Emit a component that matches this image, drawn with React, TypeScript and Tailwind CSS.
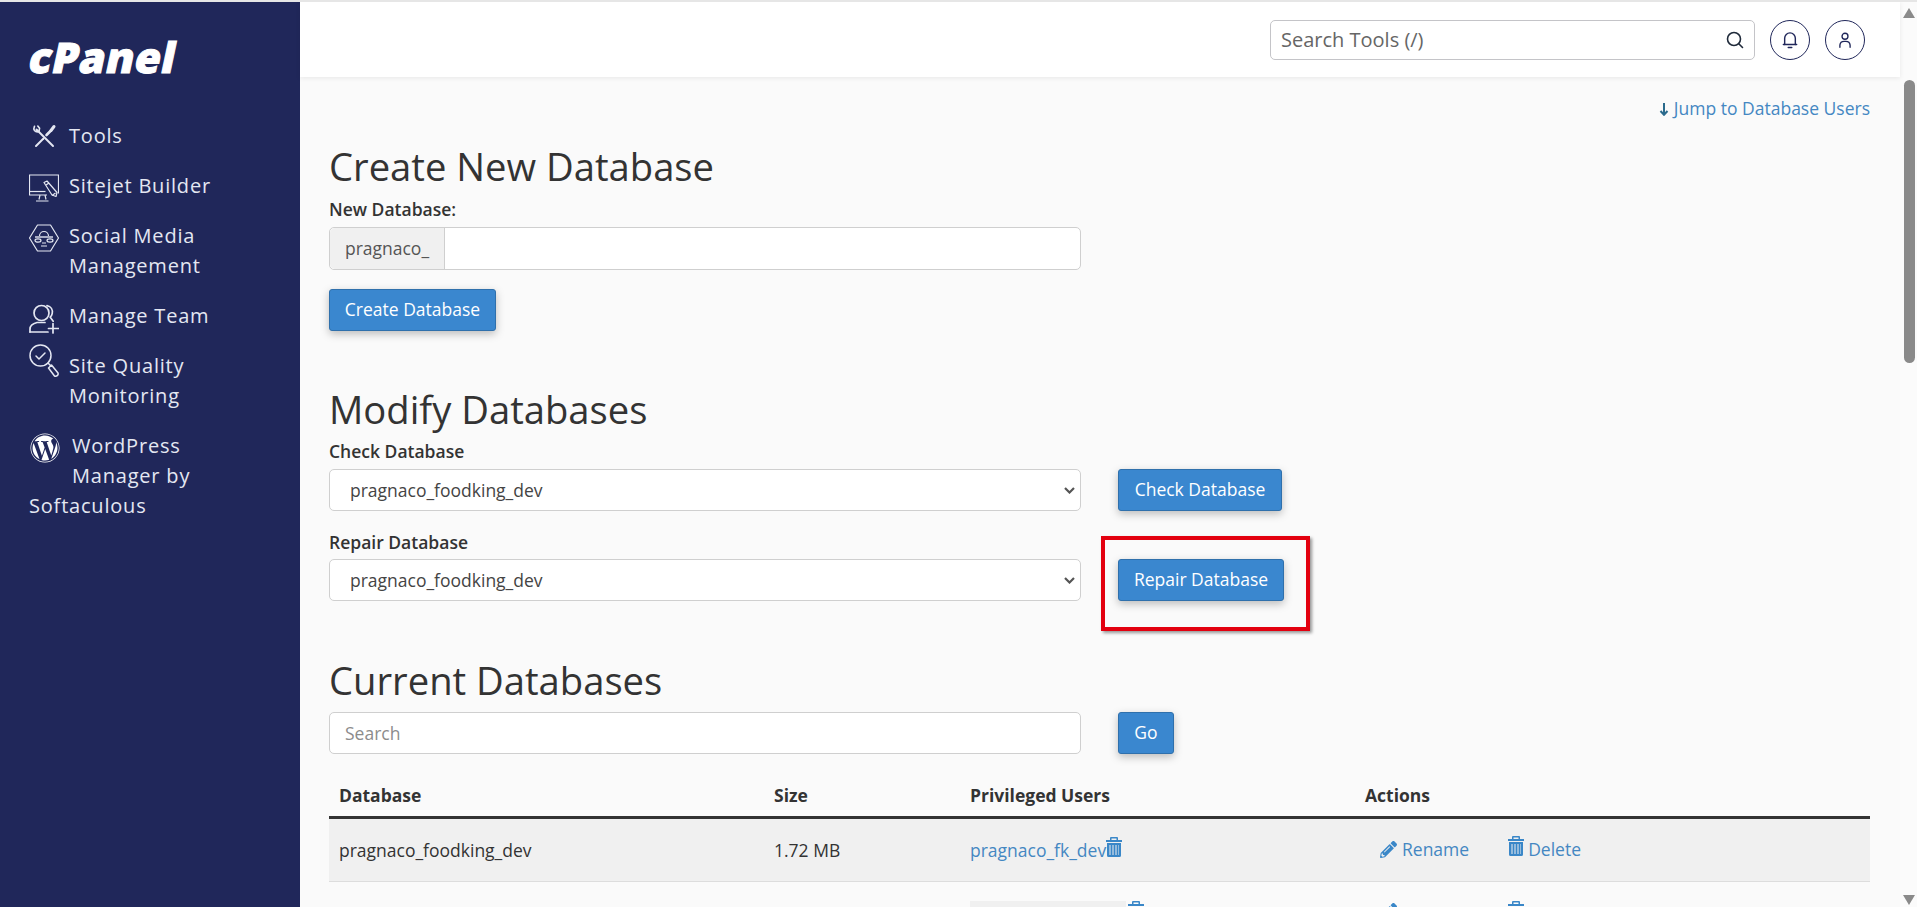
import { FaPencilAlt, FaWordpress } from "react-icons/fa";

const font = "font-['Open_Sans',sans-serif]";

function ToolsIcon() {
	return (
		<svg width="30" height="30" viewBox="0 0 30 30" fill="none" stroke="#e4e7f2" strokeWidth="2" strokeLinecap="round" strokeLinejoin="round">
			<path d="M7.5 8.5 24 25" />
			<path d="M7 25 14.5 17.5" />
			<path d="M17.5 14 22 9.5" strokeWidth="2.6" />
			<path d="M22 9.5 25 5.5" strokeWidth="3" />
			<path d="M5.5 5.2 4.8 8a3.6 3.6 0 0 0 5.2 2.4l.6-3.2-1.8-2.2" strokeWidth="1.6" />
		</svg>
	);
}

function SitejetIcon() {
	return (
		<svg width="30" height="30" viewBox="0 0 30 30" fill="none" stroke="#e4e7f2" strokeWidth="1.2" strokeLinejoin="round">
			<path d="M18 21H.5V1h29v18.5" />
			<path d="M.5 17.5h16" />
			<path d="M11 21l-1 4.5M16 21l1 4.5M7 27h12.5" />
			<path d="M15 8.5l3-1.5 10 11.5-1 4-4-1.5z" fill="#20275a" />
			<path d="M17 11l3-2M23 21.5l3.5-2.5" />
		</svg>
	);
}

function SocialIcon() {
	return (
		<svg width="30" height="28" viewBox="0 0 30 28" fill="none" stroke="#e4e7f2" strokeWidth="1.2" strokeLinejoin="round">
			<path d="M8.5 1h13L29.5 14l-8 13h-13L.5 14z" />
			<path d="M10.5 12a4.5 4.5 0 0 1 9 0" />
			<path d="M6 13h18" strokeWidth="1.4" />
			<ellipse cx="9" cy="16.5" rx="3" ry="1.6" />
			<ellipse cx="21" cy="16.5" rx="3" ry="1.6" />
			<path d="M13 19h4M12 22h6" />
		</svg>
	);
}

function TeamIcon() {
	return (
		<svg width="30" height="30" viewBox="0 0 30 30" fill="none" stroke="#e4e7f2" strokeWidth="1.7" strokeLinecap="round">
			<circle cx="12.5" cy="9" r="7.5" />
			<path d="M18 1.6c4 .8 6 4 5.2 8-.3 1.6-1 2.7-2 3.6l3 4" />
			<path d="M1 28v-3c0-3.5 3-5.5 7-6.5h8" />
			<path d="M1 28h18" />
			<path d="M24 19.5V29M19.5 24.5H29.5" />
		</svg>
	);
}

function QualityIcon() {
	return (
		<svg width="30" height="39" viewBox="0 0 30 39" fill="none" stroke="#e4e7f2" strokeWidth="1.5" strokeLinecap="round" strokeLinejoin="round">
			<circle cx="11.5" cy="11.5" r="10.5" />
			<path d="M7 12l3 3 6-6" />
			<path d="M19 19l3 3" />
			<path d="M19.5 24l3-3 6.5 8a2.5 2.5 0 0 1-3.5 3z" />
		</svg>
	);
}

function TrashIcon({ className }: { className?: string }) {
	return (
		<svg className={className} width="16" height="20" viewBox="0 0 16 20" fill="#3a87c8">
			<path d="M5 0h6a1 1 0 0 1 1 1v2h4v2H0V3h4V1a1 1 0 0 1 1-1zm.5 1.5V3h5V1.5z" />
			<path fillRule="evenodd" d="M1 6h14v12.5a1.500 1.500 0 0 1-1.500 1.500h-11A1.500 1.500 0 0 1 1 18.500zm2.500 2v10h1V8zm3 0v10h1V8zm3 0v10h1V8zm3 0v10h-.5V8z" />
		</svg>
	);
}

function BlueButton({ children, className }: { children: string; className?: string }) {
	return (
		<button className={`h-[42px] rounded-[3px] border border-[#2f70ac] bg-[#3a87cf] pb-[2px] text-[17.5px] text-white shadow-[0_3px_8px_rgba(0,0,0,0.25)] ${className ?? ""}`}>
			{children}
		</button>
	);
}

function DbSelect() {
	return (
		<div className="relative h-[42px] w-[752px]">
			<select className="h-full w-full appearance-none rounded-[5px] border border-[#cfcfcf] bg-white pl-[20px] text-[17.5px] text-[#444]">
				<option>pragnaco_foodking_dev</option>
			</select>
			<svg className="pointer-events-none absolute right-[6px] top-[18px]" width="11" height="7" viewBox="0 0 11 7" fill="none" stroke="#555" strokeWidth="2.2">
				<path d="M1 1l4.5 4.5L10 1" />
			</svg>
		</div>
	);
}

function NavItem({ icon, children, iconClass }: { icon: React.ReactNode; children: React.ReactNode; iconClass?: string }) {
	return (
		<div className="flex items-start gap-[10px]">
			<div className={`flex h-[30px] w-[30px] shrink-0 justify-center ${iconClass ?? ""}`}>{icon}</div>
			<div>{children}</div>
		</div>
	);
}

function Sidebar() {
	return (
		<aside className="w-[300px] shrink-0 bg-[#20275a] pl-[29px] text-[20px] leading-[30px] tracking-[0.8px] text-[#e4e7f2]">
			<div className="mt-[33px] h-[44px] origin-left -skew-x-[12deg] pl-[1px] text-[42px] font-extrabold leading-[44px] tracking-[0.6px] text-white [-webkit-text-stroke:1px_white]">
				cPanel
			</div>
			<nav className="mt-[42px] flex flex-col gap-[20px]">
				<NavItem icon={<ToolsIcon />}>Tools</NavItem>
				<NavItem icon={<SitejetIcon />} iconClass="mt-[3px] -mb-[3px]">Sitejet Builder</NavItem>
				<NavItem icon={<SocialIcon />} iconClass="mt-[3px]">
					Social Media
					<br />
					Management
				</NavItem>
				<NavItem icon={<TeamIcon />} iconClass="mt-[3px] -mb-[3px]">Manage Team</NavItem>
				<NavItem icon={<QualityIcon />} iconClass="-mt-[7px]">
					Site Quality
					<br />
					Monitoring
				</NavItem>
				<div>
					<div className="float-left h-[60px] w-[43px]">
						<FaWordpress size={30} className="ml-px mt-[2px] text-white" />
					</div>
					WordPress
					<br />
					Manager by
					<br />
					Softaculous
				</div>
			</nav>
		</aside>
	);
}

function Header() {
	return (
		<header className="relative z-10 flex h-[75px] shrink-0 items-start bg-white pl-[970px] pt-[18px] shadow-[0_1px_5px_rgba(0,0,0,0.08)]">
			<div className="flex h-[40px] w-[485px] items-center justify-between rounded-[5px] border border-[#c4c4c8] bg-white pl-[10px] pr-[10px]">
				<span className="text-[20px] text-[#666]">Search Tools (/)</span>
				<svg width="18" height="18" viewBox="0 0 18 18" fill="none" stroke="#1f2a3a" strokeWidth="1.6" strokeLinecap="round">
					<circle cx="8" cy="8" r="6.5" />
					<path d="M12.8 12.8 16.5 16.5" />
				</svg>
			</div>
			<div className="ml-[15px] flex h-[40px] w-[40px] items-center justify-center rounded-full border-[1.5px] border-[#20275a]">
				<svg width="16" height="18" viewBox="0 0 18 20" fill="none" stroke="#20275a" strokeWidth="1.6" strokeLinecap="round">
					<path d="M3 15V8a6 6 0 0 1 12 0v7" />
					<path d="M1.5 15h15" />
					<path d="M7 18.5h4" />
				</svg>
			</div>
			<div className="ml-[15px] flex h-[40px] w-[40px] items-center justify-center rounded-full border-[1.5px] border-[#20275a]">
				<svg width="14" height="17" viewBox="0 0 16 20" fill="none" stroke="#20275a" strokeWidth="1.6" strokeLinecap="round">
					<circle cx="8" cy="5" r="3.5" />
					<path d="M2 18v-2.5A5 5 0 0 1 7 11h2a5 5 0 0 1 5 4.5V18" />
				</svg>
			</div>
		</header>
	);
}

function Heading({ children, className }: { children: string; className?: string }) {
	return <h2 className={`h-[50px] text-[38.2px] leading-[50px] text-[#333] ${className ?? ""}`}>{children}</h2>;
}

function FieldLabel({ children, className }: { children: string; className?: string }) {
	return <div className={`h-[24px] text-[17.5px] font-semibold leading-[24px] text-[#333] ${className ?? ""}`}>{children}</div>;
}

function Content() {
	return (
		<main className="flex-1 overflow-hidden pl-[29px] pr-[30px] pt-[19px]">
			<div className="flex h-[24px] items-center justify-end text-[17.5px] leading-[24px] text-[#4487c2]">
				<svg className="mr-[5px] mt-[2px]" width="10" height="13" viewBox="0 0 10 13" fill="none" stroke="#2a6a8c" strokeWidth="2">
					<path d="M5 0v11.5M1.5 8L5 11.8 8.5 8" />
				</svg>
				Jump to Database Users
			</div>

			<Heading className="mt-[21px]">Create New Database</Heading>
			<FieldLabel className="mt-[6px]">New Database:</FieldLabel>
			<div className="mt-[6px] flex h-[43px] w-[752px] rounded-[5px] border border-[#cfcfcf] bg-white text-[17.5px]">
				<div className="flex w-[115px] items-center justify-center rounded-l-[5px] border-r border-[#cfcfcf] bg-[#f0f0f0] text-[#555]">pragnaco_</div>
				<input className="min-w-0 flex-1 outline-none" />
			</div>
			<BlueButton className="mt-[19px] block w-[167px]">Create Database</BlueButton>

			<Heading className="mt-[53px]">Modify Databases</Heading>
			<FieldLabel className="mt-[5px]">Check Database</FieldLabel>
			<div className="mt-[6px] flex gap-[37px]">
				<DbSelect />
				<BlueButton className="w-[164px]">Check Database</BlueButton>
			</div>
			<FieldLabel className="mt-[19px]">Repair Database</FieldLabel>
			<div className="relative mt-[5px] flex gap-[37px]">
				<DbSelect />
				<BlueButton className="w-[166px]">Repair Database</BlueButton>
				<div className="pointer-events-none absolute left-[772px] top-[-23px] h-[95px] w-[209px] border-4 border-[#e3000f] shadow-[2px_2px_3px_rgba(0,0,0,0.4)]" />
			</div>

			<Heading className="mt-[54px]">Current Databases</Heading>
			<div className="mt-[7px] flex gap-[37px]">
				<input placeholder="Search" className="h-[42px] w-[752px] rounded-[5px] border border-[#cfcfcf] bg-white px-[15px] text-[17.5px] outline-none placeholder:text-[#8c8c8c]" />
				<BlueButton className="w-[56px]">Go</BlueButton>
			</div>

			<table className="mt-[20px] w-[1541px] table-fixed border-collapse text-left text-[17.5px] text-[#333]">
				<colgroup>
					<col className="w-[435px]" />
					<col className="w-[196px]" />
					<col className="w-[395px]" />
					<col />
				</colgroup>
				<thead>
					<tr className="h-[43px] border-b-[3px] border-[#333] align-middle">
						<th className="pl-[10px] font-bold">Database</th>
						<th className="pl-[10px] font-bold">Size</th>
						<th className="pl-[10px] font-bold">Privileged Users</th>
						<th className="pl-[10px] font-bold">Actions</th>
					</tr>
				</thead>
				<tbody>
					<tr className="h-[64px] border-b border-[#ddd] bg-[#f0f0f0] align-middle">
						<td className="pl-[10px] pt-[1px]">pragnaco_foodking_dev</td>
						<td className="pl-[10px] pt-[1px]">1.72 MB</td>
						<td className="pl-[10px] pt-[1px]">
							<span className="inline-flex items-center text-[#4487c2]">
								pragnaco_fk_dev
								<TrashIcon className="-mt-[6px]" />
							</span>
						</td>
						<td className="pl-[25px] pt-[1px]">
							<span className="inline-flex items-center text-[#4487c2]">
								<FaPencilAlt size={17} className="mr-[5px] text-[#3a87c8]" />
								Rename
								<TrashIcon className="-mt-[6px] ml-[39px] mr-[4px]" />
								Delete
							</span>
						</td>
					</tr>
					<tr className="h-[62px] align-top">
						<td />
						<td />
						<td className="pl-[10px] pt-[19px]">
							<div className="flex items-start">
								<div className="h-[30px] w-[156px] bg-[#f0f0f0]" />
								<TrashIcon className="ml-[2px]" />
							</div>
						</td>
						<td className="pl-[25px] pt-[21px]">
							<div className="flex items-start">
								<FaPencilAlt size={17} className="text-[#3a87c8]" />
								<TrashIcon className="-mt-[2px] ml-[111px]" />
							</div>
						</td>
					</tr>
				</tbody>
			</table>
		</main>
	);
}

function Scrollbar() {
	return (
		<div className="flex w-[17px] shrink-0 flex-col items-center bg-[#fbfbfb]">
			<svg className="mt-[6px]" width="12" height="10" viewBox="0 0 12 10" fill="#8a8a8a"><path d="M6 0l6 10H0z" /></svg>
			<div className="ml-px mt-[62px] h-[283px] w-[11px] rounded-full bg-[#8a8a8a]" />
			<div className="flex-1" />
			<svg className="mb-[2px]" width="12" height="10" viewBox="0 0 12 10" fill="#8a8a8a"><path d="M6 10l6-10H0z" /></svg>
		</div>
	);
}

export default function App() {
	return (
		<div className={`flex h-[907px] w-[1917px] overflow-hidden border-t-2 border-[#e6e6e6] bg-[#fafafa] ${font}`}>
			<Sidebar />
			<div className="flex min-w-0 flex-1 flex-col">
				<Header />
				<Content />
			</div>
			<Scrollbar />
		</div>
	);
}
